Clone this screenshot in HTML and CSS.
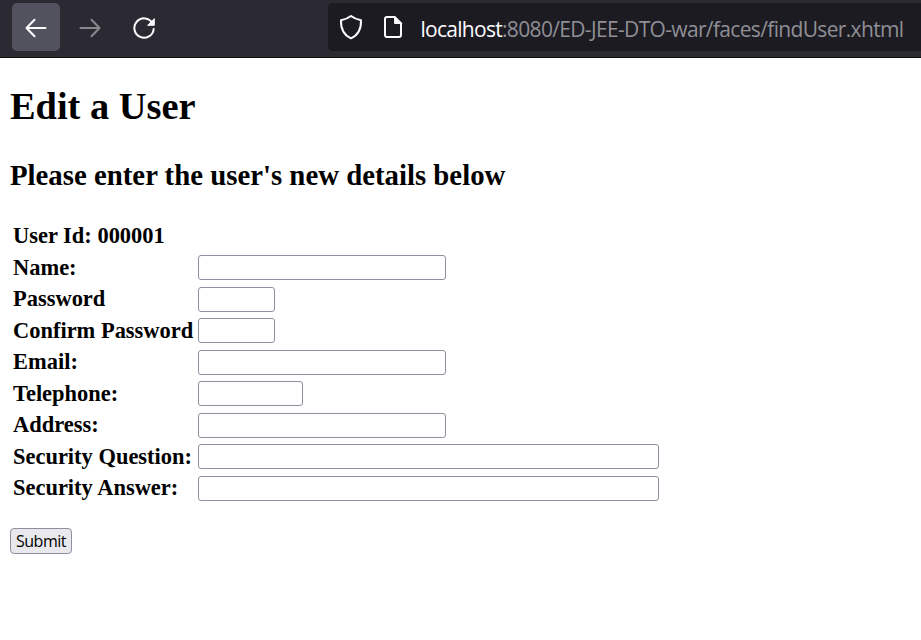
FILE: index.html
```
<!DOCTYPE html>
<html lang="en">
<head>
<meta charset="utf-8">
<title>Edit a User</title>
<link rel="stylesheet" href="styles.css">
</head>
<body>
<header class="toolbar">
  <span class="nav-button nav-active"><svg width="24" height="24" viewBox="0 0 24 24"><path d="M21.500 12H2.500M10.500 3.800L2.500 12l8 8.200"/></svg></span>
  <span class="nav-button nav-disabled"><svg width="24" height="24" viewBox="0 0 24 24"><path d="M2.500 12H21.500M13.500 3.800L21.500 12l-8 8.200"/></svg></span>
  <span class="nav-button"><svg width="24" height="24" viewBox="0 0 24 24"><path d="M20.500 7.300A9.700 9.700 0 1 0 21.700 13"/><path class="solid" d="M22.300 3v6.300h-6.300z"/></svg></span>
  <div class="address">
    <svg class="shield" width="24" height="26" viewBox="0 0 24 26"><path d="M12 2C9.500 4 5.500 5.500 2 6.200C1.700 14 5 21 12 24.300C19 21 22.300 14 22 6.200C18.500 5.500 14.500 4 12 2Z"/></svg>
    <svg class="page-icon" width="20" height="24" viewBox="0 0 20 24"><path d="M4 2H11.500L18 8.500V20a2 2 0 0 1-2 2H4a2 2 0 0 1-2-2V4a2 2 0 0 1 2-2Z"/><path class="solid" d="M11.500 1.500V8.500H18.500Z"/></svg>
    <span class="url"><span class="host">localhost</span><span class="path">:8080/ED-JEE-DTO-war/faces/findUser.xhtml</span></span>
  </div>
</header>
<main>
  <h1>Edit a User</h1>
  <h2>Please enter the user's new details below</h2>
  <form>
    <div class="fields">
      <span class="label">User Id: 000001</span><span></span>
      <label for="name">Name:</label><input id="name" class="medium">
      <label for="pw">Password</label><input id="pw" type="password" class="tiny">
      <label for="pw2">Confirm Password</label><input id="pw2" type="password" class="tiny">
      <label for="email">Email:</label><input id="email" class="medium">
      <label for="tel">Telephone:</label><input id="tel" class="small">
      <label for="addr">Address:</label><input id="addr" class="medium">
      <label for="question">Security Question:</label><input id="question" class="large">
      <label for="answer">Security Answer:</label><input id="answer" class="large">
    </div>
    <button type="button">Submit</button>
  </form>
</main>
</body>
</html>
```
FILE: styles.css
```
* { box-sizing: border-box; }
body {
  margin: 0;
  background: #fff;
  color: #000;
  font-family: "Liberation Serif", serif;
}
.toolbar {
  display: flex;
  height: 58px;
  padding: 3px 0 0 12px;
  background: #2b2a33;
  border-bottom: 1px solid #0c0c0d;
}
.nav-button {
  display: flex;
  align-items: center;
  justify-content: center;
  width: 48px;
  height: 48px;
  margin-right: 6px;
  padding-top: 2px;
  border-radius: 5px;
}
.nav-active { background: #52525e; }
.nav-disabled svg { opacity: .45; }
svg { fill: none; stroke: #fbfbfe; stroke-width: 2; stroke-linecap: round; stroke-linejoin: round; flex: none; }
.solid { fill: #fbfbfe; stroke-width: 1; }
.address {
  display: flex;
  align-items: center;
  flex: 1;
  height: 48px;
  margin-left: 154px;
  padding-left: 11px;
  border-radius: 5px 0 0 5px;
  background: #1c1b22;
  overflow: hidden;
}
.page-icon { margin-left: 20px; }
.url {
  margin-left: 17.5px;
  padding-top: 3px;
  font: 21px "Open Sans", sans-serif;
  white-space: nowrap;
}
.host { color: #fbfbfe; letter-spacing: -.72px; }
.path { color: #8f8f95; letter-spacing: -.66px; }
main { padding: 0 10px; }
h1 { margin: 26px 0 0; font-size: 38.4px; line-height: 44px; }
h2 { margin: 31px 0 0; font-size: 28.8px; line-height: 32px; }
.fields {
  display: grid;
  grid-template-columns: 185px 1fr;
  grid-auto-rows: 31.5px;
  align-items: center;
  margin: 29.300px 0 0 3px;
  font-size: 22.46px;
  font-weight: bold;
  line-height: 26px;
  white-space: nowrap;
}
input {
  height: 25px;
  padding: 0 4px;
  border: 1px solid #8f8f9d;
  border-radius: 3px;
  background: #fff;
}
.tiny { width: 77px; }
.small { width: 105px; }
.medium { width: 248px; }
.large { width: 461px; }
button {
  display: block;
  width: 62px;
  height: 26px;
  margin-top: 24.200px;
  padding: 0;
  border: 1px solid #8f8f9d;
  border-radius: 4px;
  background: #e9e9ed;
  color: #000;
  font: 16px/22px "Open Sans", sans-serif;
  letter-spacing: -.5px;
}
```
